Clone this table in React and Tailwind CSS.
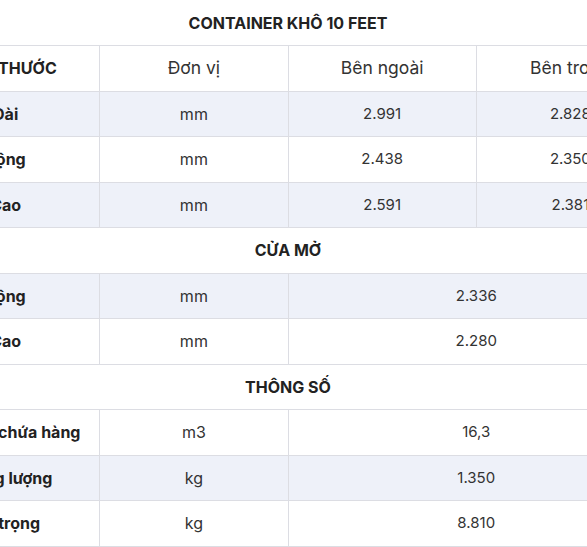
import React from 'react';

const sections = [
  {
    title: 'CONTAINER KHÔ 10 FEET',
    header: ['KÍCH THƯỚC', 'Đơn vị', 'Bên ngoài', 'Bên trong'],
    rows: [
      ['Dài', 'mm', '2.991', '2.828'],
      ['Rộng', 'mm', '2.438', '2.350'],
      ['Cao', 'mm', '2.591', '2.381'],
    ],
  },
  {
    title: 'CỬA MỞ',
    rows: [
      ['Rộng', 'mm', '2.336'],
      ['Cao', 'mm', '2.280'],
    ],
  },
  {
    title: 'THÔNG SỐ',
    rows: [
      ['Thể tích chứa hàng', 'm3', '16,3'],
      ['Trọng lượng', 'kg', '1.350'],
      ['Tải trọng', 'kg', '8.810'],
    ],
  },
];

const cell = 'h-[45.5px] border border-[#dcdde3] text-center align-middle';

export default function App() {
  return (
    <div className="w-[587px] h-[547px] overflow-hidden bg-white" style={{ fontFamily: 'Inter, "Noto Sans", sans-serif' }}>
      <table className="ml-[-89px] w-[754px] table-fixed border-collapse">
        <tbody>
          {sections.map((section, s) => {
            const body = [];
            body.push(
              <tr key={`t${s}`}>
                <td colSpan={4} className={`h-[45.5px] border-b border-[#dcdde3] text-center align-middle text-[16px] font-bold text-[#222] ${s === 0 ? '' : 'border-t'}`}>
                  {section.title}
                </td>
              </tr>
            );
            if (section.header) {
              body.push(
                <tr key={`h${s}`}>
                  {section.header.map((h, i) => (
                    <td key={i} className={`${cell} ${i === 0 ? 'font-bold text-[#222] text-[16px]' : 'text-[#333] text-[17.5px]'}`}>
                      {h}
                    </td>
                  ))}
                </tr>
              );
            }
            section.rows.forEach((r, ri) => {
              // stripes: first data row shaded in the first two blocks, second row in the last
              const shaded = s === 2 ? ri % 2 === 1 : ri % 2 === 0;
              body.push(
                <tr key={`r${s}-${ri}`} className={shaded ? 'bg-[#eef1f9]' : 'bg-white'}>
                  <td className={`${cell} text-[16px] font-bold text-[#222]`}>{r[0]}</td>
                  <td className={`${cell} text-[16px] text-[#333]`}>{r[1]}</td>
                  {r.length === 4 ? (
                    <>
                      <td className={`${cell} text-[15px] text-[#333]`}>{r[2]}</td>
                      <td className={`${cell} text-[15px] text-[#333]`}>{r[3]}</td>
                    </>
                  ) : (
                    <td colSpan={2} className={`${cell} text-[15px] text-[#333]`}>{r[2]}</td>
                  )}
                </tr>
              );
            });
            return body;
          })}
        </tbody>
      </table>
    </div>
  );
}
